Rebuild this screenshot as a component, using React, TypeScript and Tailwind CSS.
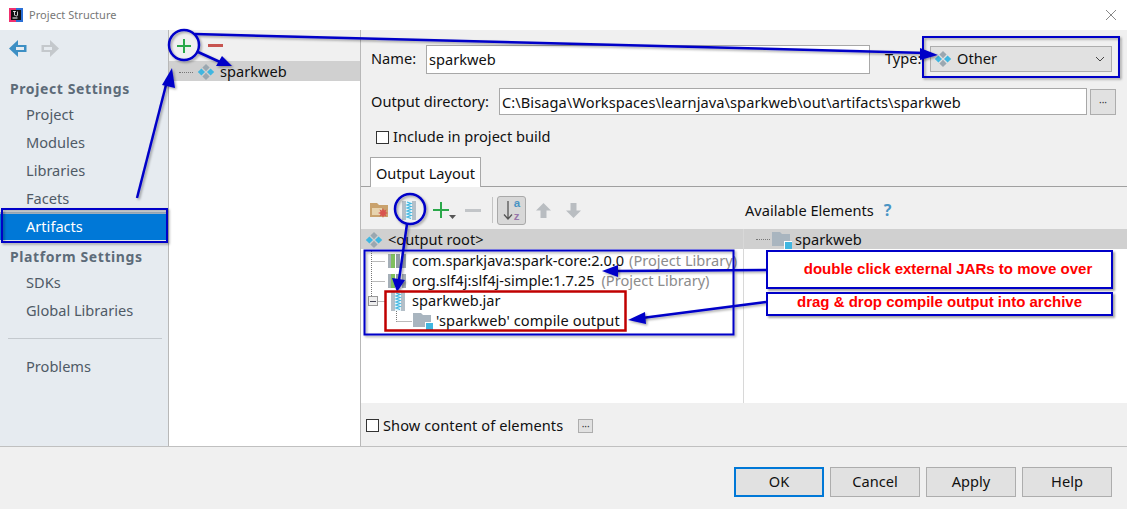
import React from 'react';

const blue = '#0000c8';

function Diamonds({ size = 18 }: { size?: number }) {
  return (
    <svg width={size} height={size} viewBox="0 0 18 18" className="shrink-0">
      <path d="M9 1l3.600 3.600L9 8.200 5.400 4.600z" fill="#9aa7b0" />
      <path d="M9 9.800l3.600 3.600L9 17l-3.600-3.600z" fill="#9aa7b0" />
      <path d="M4.400 5.400L8 9l-3.600 3.600L.8 9z" fill="#40b6e0" />
      <path d="M13.600 5.400L17.200 9l-3.600 3.600L10 9z" fill="#40b6e0" />
    </svg>
  );
}

function OutputFolder() {
  return (
    <svg width="20" height="18" viewBox="0 0 20 18" className="shrink-0">
      <path d="M0 1h8l2 2h8v12H0z" fill="#a9b5bf" />
      <rect x="12" y="10" width="8" height="8" fill="#fff" />
      <rect x="13" y="11" width="7" height="7" fill="#40b6e0" />
    </svg>
  );
}

function LibBars() {
  return (
    <svg width="19" height="16" viewBox="0 0 19 16" className="shrink-0">
      <rect x="0" y="1" width="3" height="14" fill="#a5afb8" />
      <rect x="3" y="1" width="4" height="14" fill="#7fbf5f" />
      <rect x="8" y="1" width="4" height="14" fill="#8f9ba5" />
      <rect x="14" y="1" width="4" height="14" fill="#a5afb8" />
    </svg>
  );
}

function ZipIcon() {
  return (
    <svg width="16" height="19" viewBox="0 0 16 19" className="shrink-0">
      <rect x="1" y="0" width="14" height="19" fill="#b4bfc8" />
      <rect x="5" y="0" width="6" height="19" fill="#e8f6fb" />
      <path d="M6 1l4 1.500-4 1.500 4 1.500-4 1.500 4 1.500-4 1.500 4 1.500-4 1.500 4 1.500-4 1.500 4 1.500" fill="none" stroke="#40b6e0" strokeWidth="1.200" />
    </svg>
  );
}

function NavArrow({ flip, color, inner }: { flip?: boolean; color: string; inner: string }) {
  return (
    <svg width="18" height="17" viewBox="0 0 18 17" style={flip ? { transform: 'scaleX(-1)' } : undefined}>
      <path d="M9 0L0 8.500 9 17v-5h8.500V5H9z" fill={color} />
      <path d="M7 7h8v3H7z" fill={inner} />
    </svg>
  );
}

function Guide({ width, junction, plus }: { width: number; junction?: boolean; plus?: boolean }) {
  return (
    <svg width={width} height="20" className="shrink-0">
      <path d="M10.500 0V10.500M10.500 10.500H24" stroke="#777" strokeDasharray="1 1" fill="none" />
      {junction && <path d="M10.500 10V20" stroke="#777" strokeDasharray="1 1" fill="none" />}
      {plus && (
        <>
          <rect x="7.500" y="5.500" width="9" height="9" fill="#eee" stroke="#999" />
          <path d="M9 10.500h6" stroke="#445" />
        </>
      )}
    </svg>
  );
}

function SideItem({ label, active }: { label: string; active?: boolean }) {
  return (
    <div className={`flex h-7 items-center pl-[26px] ${active ? 'bg-[#0078d7] text-white border-t-2 border-t-[#9fb0c0]' : 'pt-[2px] text-[#4f5a66]'}`}>
      {label}
    </div>
  );
}

function SideHeader({ label }: { label: string }) {
  return <div className="flex h-6 items-center pl-[10px] text-[14px] font-bold tracking-[0.6px] text-[#5d6b79]">{label}</div>;
}

function DialogButton({ label, primary }: { label: string; primary?: boolean }) {
  return (
    <button className={`h-[30px] w-[90px] bg-[#e1e1e1] text-[#111] border ${primary ? 'border-2 border-[#0078d7]' : 'border-[#adadad]'}`}>
      {label}
    </button>
  );
}

function Dots({ className }: { className: string }) {
  return (
    <div className={`flex items-center justify-center border border-[#adadad] bg-[#e1e1e1] text-[10px] leading-none text-[#333] ${className}`}>
      ···
    </div>
  );
}

export default function App() {
  return (
    <div className="relative flex h-[509px] w-[1127px] flex-col overflow-hidden bg-[#f0f0f0] font-['Noto_Sans',sans-serif] text-[14.6px] text-[#111]">
      {/* title bar */}
      <div className="flex h-[30px] shrink-0 items-center bg-white pl-[9px] pr-[9px]">
        <svg width="14" height="14" viewBox="0 0 14 14">
          <rect width="14" height="14" fill="#2b6fd6" />
          <rect width="7" height="14" fill="#f0306e" />
          <rect x="2" y="2" width="10" height="10" fill="#111" />
          <rect x="3.500" y="9.500" width="5" height="1" fill="#fff" />
          <path d="M4 3.500h3M5.500 3.500v4M8.500 3.500v3.500a1 1 0 0 1-2 0" stroke="#fff" strokeWidth="0.8" fill="none" />
        </svg>
        <span className="ml-[6px] text-[11px] tracking-[0.05px] text-[#777]">Project Structure</span>
        <svg width="14" height="14" viewBox="0 0 14 14" className="ml-auto">
          <path d="M2 2l10 10M12 2L2 12" stroke="#888" fill="none" />
        </svg>
      </div>

      {/* main */}
      <div className="flex h-[417px] shrink-0 border-b border-[#c0c0c0]">
        {/* sidebar */}
        <div className="flex w-[169px] shrink-0 flex-col border-r border-[#b8b8b8] bg-[#e6ebf0]">
          <div className="flex h-[46px] shrink-0 gap-[14px] pl-[9px] pt-[10px]">
            <NavArrow color="#3d8fc4" inner="#e6ebf0" />
            <NavArrow flip color="#c4c8cc" inner="#e6ebf0" />
          </div>
          <SideHeader label="Project Settings" />
          <SideItem label="Project" />
          <SideItem label="Modules" />
          <SideItem label="Libraries" />
          <SideItem label="Facets" />
          <SideItem label="Artifacts" active />
          <div className="mt-1">
            <SideHeader label="Platform Settings" />
          </div>
          <SideItem label="SDKs" />
          <SideItem label="Global Libraries" />
          <div className="ml-[8px] mr-[6px] mt-[14px] h-px bg-[#c4c9ce]" />
          <div className="mt-[13px]">
            <SideItem label="Problems" />
          </div>
        </div>

        {/* artifact list */}
        <div className="flex w-[192px] shrink-0 flex-col border-r border-[#b8b8b8] bg-white">
          <div className="flex h-[31px] shrink-0 items-center gap-[17px] bg-[#f0f0f0] pl-[8px]">
            <svg width="14" height="14" viewBox="0 0 14 14">
              <path d="M6 0h2v6h6v2H8v6H6V8H0V6h6z" fill="#2aa84a" />
            </svg>
            <div className="h-[3px] w-[15px] bg-[#c75450]" />
          </div>
          <div className="flex h-5 items-center bg-[#d0d0d0] pl-[10px] pt-[2px]">
            <div className="w-[14px] border-t border-dotted border-[#777]" />
            <span className="ml-[4px]"><Diamonds /></span>
            <span className="ml-[5px]">sparkweb</span>
          </div>
        </div>

        {/* details */}
        <div className="flex min-w-0 flex-1 flex-col">
          <div className="mt-[15px] flex h-[28px] shrink-0 items-center pl-[10px]">
            <span className="w-[55px]">Name:</span>
            <input readOnly value="sparkweb" className="h-[29px] w-[444px] border border-[#a8a8a8] bg-white px-[2px] text-[14.6px] outline-none" />
            <span className="ml-[15px] w-[45px]">Type:</span>
            <div className="flex h-[26px] w-[182px] items-center border border-[#adadad] bg-[#e1e1e1] pl-[3px] pr-[6px]">
              <Diamonds />
              <span className="ml-[5px]">Other</span>
              <svg width="10" height="6" viewBox="0 0 10 6" className="ml-auto">
                <path d="M1 1l4 4 4-4" stroke="#444" fill="none" />
              </svg>
            </div>
          </div>
          <div className="mt-[15px] flex h-[27px] shrink-0 items-center pl-[10px]">
            <span className="w-[128px]">Output directory:</span>
            <input readOnly value="C:\Bisaga\Workspaces\learnjava\sparkweb\out\artifacts\sparkweb" className="h-[27px] w-[588px] border border-[#a8a8a8] bg-white px-[2px] text-[14.6px] tracking-[0.08px] outline-none" />
            <Dots className="ml-[3px] h-[26px] w-[26px]" />
          </div>
          <div className="mt-[12px] flex h-5 shrink-0 items-center pl-[15px]">
            <div className="h-[13px] w-[13px] border border-[#333] bg-white" />
            <span className="ml-[4px]">Include in project build</span>
          </div>
          {/* tabs */}
          <div className="mt-[10px] flex h-[30px] shrink-0 items-stretch border-b border-[#a0a0a0] pl-[9px]">
            <div className="-mb-px flex w-[111px] items-center justify-center border border-[#a8a8a8] border-b-0 bg-white pt-[2px]">Output Layout</div>
          </div>
          {/* toolbar row */}
          <div className="flex h-[42px] shrink-0 items-center pt-[4px]">
            <div className="flex w-[383px] items-center pl-[9px]">
              <svg width="19" height="17" viewBox="0 0 19 17">
                <path d="M0 1h7l2 2h9v12H0z" fill="#c9a26d" />
                <rect x="2" y="6" width="10" height="7" fill="#e7d3ae" />
                <path d="M13 6l1 2.500 2.500-1-1 2.500 2.500 1-2.500 1 1 2.500-2.500-1-1 2.500-1-2.500-2.500 1 1-2.500-2.500-1 2.500-1-1-2.500 2.500 1z" fill="#d9534f" />
              </svg>
              <span className="ml-[12px]"><ZipIcon /></span>
              <svg width="16" height="16" viewBox="0 0 16 16" className="ml-[16px]">
                <path d="M7 0h2v7h7v2H9v7H7V9H0V7h7z" fill="#2aa84a" />
              </svg>
              <svg width="7" height="4" viewBox="0 0 7 4" className="mt-[14px]">
                <path d="M0 0h7L3.500 4z" fill="#555" />
              </svg>
              <div className="ml-[9px] h-[3px] w-[16px] bg-[#c2c5c8]" />
              <div className="ml-[11px] h-[26px] w-px bg-[#c4c4c4]" />
              <div className="ml-[4px] flex h-[29px] w-[29px] items-center justify-center gap-px rounded-[3px] border border-[#a9a9a9] bg-[#d8d8d8]">
                <svg width="10" height="22" viewBox="0 0 10 22">
                  <path d="M5 2v18M1 15.500L5 20l4-4.500" stroke="#555" fill="none" strokeWidth="1.300" />
                </svg>
                <div className="flex flex-col font-['Liberation_Sans',sans-serif] text-[11.5px] font-bold leading-[13.5px]">
                  <span className="text-[#4a94c4]">a</span>
                  <span className="text-[#9876aa]">z</span>
                </div>
              </div>
              <svg width="15" height="16" viewBox="0 0 15 16" className="ml-[10px]">
                <path d="M7.500 1L15 8.500h-4.500V16h-6V8.500H0z" fill="#b9bdc1" />
              </svg>
              <svg width="15" height="16" viewBox="0 0 15 16" className="ml-[15px]">
                <path d="M7.500 16L15 8.500h-4.500V1h-6v7.500H0z" fill="#b9bdc1" />
              </svg>
            </div>
            <span className="pl-px pt-[2px]">Available Elements</span>
            <span className="ml-[10px] text-[16px] font-bold text-[#4a94c4]">?</span>
          </div>
          {/* trees */}
          <div className="flex h-[174px] shrink-0 bg-white">
            <div className="w-[383px] border-r border-[#d8d8d8]">
              <div className="flex h-5 items-center bg-[#d0d0d0] pl-[4px] pt-px">
                <Diamonds />
                <span className="ml-[5px]">&lt;output root&gt;</span>
              </div>
              <div className="mt-[2px] flex h-5 items-center">
                <Guide width={27} junction />
                <LibBars />
                <span className="ml-[5px]">com.sparkjava:spark-core:2.0.0</span>
                <span className="ml-[5px] text-[#8c8c8c]">(Project Library)</span>
              </div>
              <div className="flex h-5 items-center">
                <Guide width={27} junction />
                <LibBars />
                <span className="ml-[5px]">org.slf4j:slf4j-simple:1.7.25</span>
                <span className="ml-[7px] text-[#8c8c8c]">(Project Library)</span>
              </div>
              <div className="flex h-5 items-center">
                <Guide width={29} plus />
                <ZipIcon />
                <span className="ml-[6px]">sparkweb.jar</span>
              </div>
              <div className="flex h-5 items-center pl-[25px]">
                <svg width="27" height="20" className="shrink-0">
                  <path d="M10.500 0V10.500M10.500 10.500H26" stroke="#777" strokeDasharray="1 1" fill="none" />
                </svg>
                <OutputFolder />
                <span className="ml-[3px] tracking-[0.12px]">'sparkweb' compile output</span>
              </div>
            </div>
            <div className="flex-1">
              <div className="flex h-5 items-center bg-[#d0d0d0] pl-[12px] pt-px">
                <div className="w-[14px] border-t border-dotted border-[#777]" />
                <span className="ml-[2px]"><OutputFolder /></span>
                <span className="ml-[3px]">sparkweb</span>
              </div>
            </div>
          </div>
          <div className="flex flex-1 items-center pl-[5px] pt-[2px]">
            <div className="h-[13px] w-[13px] border border-[#333] bg-white" />
            <span className="ml-[4px] tracking-[0.08px]">Show content of elements</span>
            <Dots className="ml-[15px] h-[14px] w-[15px]" />
          </div>
        </div>
      </div>

      {/* footer */}
      <div className="flex flex-1 items-start justify-end gap-[6px] pr-[15px] pt-[20px]">
        <DialogButton label="OK" primary />
        <DialogButton label="Cancel" />
        <DialogButton label="Apply" />
        <DialogButton label="Help" />
      </div>

      {/* hand drawn annotations on top of the screenshot */}
      <svg width="1127" height="509" className="pointer-events-none absolute left-0 top-0">
        <defs>
          <filter id="sh" x="-5%" y="-5%" width="110%" height="110%">
            <feDropShadow dx="1.500" dy="1.500" stdDeviation="1" floodColor="#000" floodOpacity="0.35" />
          </filter>
        </defs>
        <g filter="url(#sh)" fill="none" stroke={blue} strokeWidth="2.500">
          <circle cx="184" cy="45" r="15" />
          <circle cx="410" cy="209" r="15" />
          <path d="M195 34L926 53" />
          <path d="M198 52L220 62" />
          <path d="M137 198L166 85" />
          <path d="M407 224L399 280" />
          <path d="M766 270L615 271" />
          <path d="M766 302L642 318" />
          <rect x="2" y="209" width="165" height="33" strokeWidth="2" />
          <rect x="923" y="37" width="196" height="40" strokeWidth="2" />
          <rect x="364.500" y="250.500" width="369" height="84" strokeWidth="2" />
        </g>
        <g fill={blue} filter="url(#sh)">
          <path d="M938 55L920 48L920 60z" />
          <path d="M232 66L216 66L222 56z" />
          <path d="M172 68L162 85L175 88z" />
          <path d="M397 292L392 278L405 280z" />
          <path d="M602 271L618 265L618 277z" />
          <path d="M628 320L645 312L646 324z" />
        </g>
        <rect x="385.500" y="291.500" width="240" height="39" fill="none" stroke="#c00000" strokeWidth="2.500" />
      </svg>

      <div className="absolute left-[766px] top-[250px] flex h-[39px] w-[347px] items-center justify-center border-2 border-[#0000c8] bg-white pl-[17px] font-['Liberation_Sans',sans-serif] text-[15px] font-bold text-[#ff0000] shadow-[2px_2px_2px_rgba(0,0,0,0.35)]">
        double click external JARs to move over
      </div>
      <div className="absolute left-[766px] top-[292px] flex h-[24px] w-[347px] items-center justify-center border-2 border-[#0000c8] bg-white pb-[3px] font-['Liberation_Sans',sans-serif] text-[15px] font-bold text-[#ff0000] shadow-[2px_2px_2px_rgba(0,0,0,0.35)]">
        drag &amp; drop compile output into archive
      </div>
    </div>
  );
}
